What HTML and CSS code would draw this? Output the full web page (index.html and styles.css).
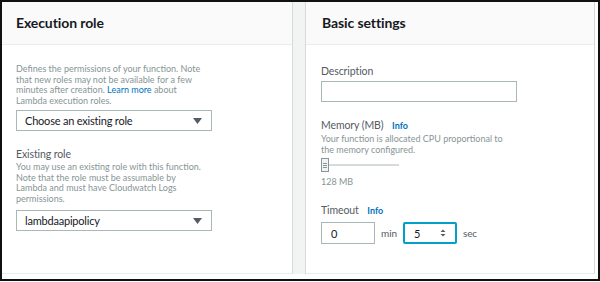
FILE: index.html
```html
<!DOCTYPE html>
<html lang="en">
    <head>
        <meta charset="UTF-8" />
        <meta name="viewport" content="width=device-width, initial-scale=1.0" />
        <title>Lambda settings</title>
        <link rel="stylesheet" href="styles.css">
    </head>
    <body>
        <div class="frame">
            <!-- 左侧：执行角色 -->
            <section class="panel panel-left">
                <div class="panel-head">Execution role</div>
                <div class="panel-body">
                    <p class="help">Defines the permissions of your function. Note that new roles may not be available for a few minutes after creation. <span class="link">Learn more</span> about Lambda execution roles.</p>
                    <div class="select">
                        <span>Choose an existing role</span>
                        <svg class="caret" width="9" height="6" viewBox="0 0 9 6"><path d="M0 0 H9 L4.5 6 Z" fill="#545b64"/></svg>
                    </div>
                    <div class="label">Existing role</div>
                    <p class="help help-top">You may use an existing role with this function. Note that the role must be assumable by Lambda and must have Cloudwatch Logs permissions.</p>
                    <div class="select">
                        <span>lambdaapipolicy</span>
                        <svg class="caret" width="9" height="6" viewBox="0 0 9 6"><path d="M0 0 H9 L4.5 6 Z" fill="#545b64"/></svg>
                    </div>
                </div>
            </section>
            <div class="gutter"></div>
            <!-- 右侧：基本设置 -->
            <section class="panel panel-right">
                <div class="panel-head">Basic settings</div>
                <div class="panel-body">
                    <div class="label">Description</div>
                    <div class="input input-wide"></div>
                    <div class="label label-gap">Memory (MB) <span class="info">Info</span></div>
                    <p class="help help-top">Your function is allocated CPU proportional to the memory configured.</p>
                    <div class="slider">
                        <div class="thumb"><i></i><i></i><i></i></div>
                        <div class="track"></div>
                    </div>
                    <div class="value">128 MB</div>
                    <div class="label label-gap2">Timeout <span class="info">Info</span></div>
                    <div class="timeout">
                        <div class="input input-small">0</div>
                        <span class="unit">min</span>
                        <div class="input input-small focused">
                            <span>5</span>
                            <svg class="spin" width="6" height="10" viewBox="0 0 6 10"><path d="M0.5 4 L3 1.5 L5.5 4 Z M0.5 6 L3 8.5 L5.5 6 Z" fill="#545b64"/></svg>
                        </div>
                        <span class="unit">sec</span>
                    </div>
                </div>
            </section>
        </div>
    </body>
</html>
```

FILE: styles.css
```css
* {
    margin: unset;
    padding: unset;
    box-sizing: border-box;
}
body {
    font-family: Lato, "Noto Sans", sans-serif;
    color: #16191f;
    background: #fff;
}
.frame {
    width: 600px;
    height: 281px;
    border: 2px solid #111;
    display: flex;
    align-items: flex-start;
    background: #fff;
}
.panel {
    height: 272px;
    border-right: 1px solid #d5dbdb;
    border-bottom: 1px solid #eaeded;
    background: #fff;
}
.panel-left {
    width: 291px;
}
.panel-right {
    width: 289px;
}
.gutter {
    width: 13px;
    height: 272px;
    background: #f2f3f3;
    border-right: 1px solid #d5dbdb;
}
.panel-head {
    height: 43px;
    background: #fafafa;
    border-bottom: 1px solid #eaeded;
    font-size: 14px;
    font-weight: 700;
    letter-spacing: -0.1px;
    line-height: 42px;
    padding-left: 14px;
}
.panel-right .panel-head {
    padding-left: 16px;
}
.panel-body {
    padding: 19px 14px 0;
}
.panel-right .panel-body {
    padding: 19px 15px 0;
}
.help {
    font-size: 9px;
    line-height: 10.5px;
    color: #879596;
    width: 192px;
}
.help-top {
    margin-top: 1px;
}
.link {
    color: #0073bb;
}
.select {
    width: 196px;
    height: 21px;
    border: 1px solid #aab7b8;
    display: flex;
    justify-content: space-between;
    align-items: center;
    padding: 0 9px 0 8px;
    font-size: 11px;
    letter-spacing: -0.2px;
}
.help + .select {
    margin-top: 4px;
}
.help-top + .select {
    margin-top: 6px;
}
.select + .label {
    margin-top: 16px;
}
.label {
    font-size: 10.5px;
    letter-spacing: -0.1px;
    line-height: 14px;
    color: #545b64;
}
.label-gap {
    margin-top: 16px;
}
.label-gap2 {
    margin-top: 15px;
}
.info {
    font-size: 9px;
    letter-spacing: 0;
    font-weight: 700;
    color: #0073bb;
    margin-left: 6px;
}
.input {
    border: 1px solid #aab7b8;
    height: 21px;
    font-size: 11px;
    display: flex;
    align-items: center;
    padding: 0 9px;
}
.input-wide {
    width: 196px;
    margin-top: 3px;
}
.slider {
    display: flex;
    align-items: center;
    margin-top: 3px;
    height: 14px;
}
.thumb {
    width: 8px;
    height: 14px;
    border: 1px solid #879596;
    background: #f2f3f3;
    display: flex;
    flex-direction: column;
    justify-content: center;
    gap: 1px;
    padding: 0 1px;
}
.thumb i {
    display: block;
    height: 1px;
    background: #879596;
}
.track {
    width: 70px;
    height: 2px;
    background: #d5dbdb;
}
.value {
    font-size: 9px;
    line-height: 12px;
    color: #879596;
    margin-top: 4px;
}
.timeout {
    display: flex;
    align-items: center;
    margin-top: 4px;
}
.input-small {
    width: 54px;
    height: 22px;
    justify-content: space-between;
}
.unit {
    font-size: 10px;
    letter-spacing: -0.1px;
    color: #545b64;
    padding: 0 6px;
}
.focused {
    border: 2px solid #00a1c9;
    border-radius: 2px;
    padding: 0 9px 0 9px;
}
```
